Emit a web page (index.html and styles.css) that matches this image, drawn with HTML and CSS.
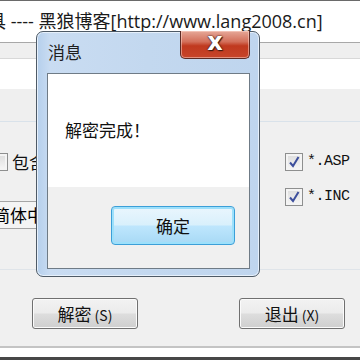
FILE: index.html
```html
<!DOCTYPE html>
<html>
<head>
<meta charset="utf-8">
<link rel="stylesheet" href="styles.css">
</head>
<body>
<div class="app">
  <div class="caption"><span class="cap-text">具 ---- 黑狼博客[http://www.lang2008.cn]</span></div>
  <div class="toolbar"></div>
  <div class="whiteband"></div>
  <div class="grayband"></div>
  <div class="main">
    <div class="col-left">
      <div class="check-row"><span class="cb"></span><span class="lbl">包含文件</span></div>
      <div class="combo">简体中文</div>
    </div>
    <div class="col-right">
      <div class="check-row"><span class="cb checked"><svg viewBox="0 0 18 18" width="18" height="18"><path d="M5 9.5 L8 13 L13.5 4" fill="none" stroke="#3d4f9c" stroke-width="2"/></svg></span><span class="mono">*.ASP</span></div>
      <div class="check-row"><span class="cb checked"><svg viewBox="0 0 18 18" width="18" height="18"><path d="M5 9.5 L8 13 L13.5 4" fill="none" stroke="#3d4f9c" stroke-width="2"/></svg></span><span class="mono">*.INC</span></div>
    </div>
  </div>
  <div class="footer">
    <button class="btn">解密<span class="acc">(S)</span></button>
    <button class="btn">退出<span class="acc">(X)</span></button>
  </div>
  <div class="bottom"></div>
</div>

<div class="dialog">
  <div class="dlg-title">消息</div>
  <div class="close"><span>x</span></div>
  <div class="client">
    <div class="msg">解密完成！</div>
    <div class="actions"><button class="ok">确定</button></div>
  </div>
</div>
</body>
</html>
```
FILE: styles.css
```css
html, body {
  margin: 0;
  padding: 0;
}
body {
  width: 360px;
  height: 360px;
  overflow: hidden;
  position: relative;
  background: #f0f0f0;
  font-family: "Noto Sans CJK SC", sans-serif;
}
.app {
  display: flex;
  flex-direction: column;
  height: 360px;
}
.caption {
  height: 41px;
  border-top: 1px solid #6a6a6a;
  background: #ffffff;
  white-space: nowrap;
  overflow: hidden;
}
.cap-text {
  display: block;
  margin-left: -12px;
  padding-top: 8px;
  font-family: "Open Sans", "Noto Sans CJK SC", sans-serif;
  font-size: 18px;
  line-height: 24px;
  color: #1a1a1a;
}
.toolbar {
  height: 15px;
  border-top: 1px solid #a8a8a8;
  border-bottom: 1px solid #d8d8d8;
  background: #efefef;
}
.whiteband {
  height: 30px;
  background: #ffffff;
}
.grayband {
  height: 32px;
  background: #efefef;
  border-bottom: 1px solid #d9e2ea;
}
.main {
  height: 147px;
  display: flex;
  justify-content: space-between;
  padding-top: 30px;
  box-sizing: border-box;
}
.col-left {
  display: flex;
  flex-direction: column;
  gap: 30px;
  margin-left: -10px;
}
.col-right {
  display: flex;
  flex-direction: column;
  gap: 16px;
  width: 75px;
}
.check-row {
  display: flex;
  align-items: center;
  height: 19px;
  gap: 4px;
}
.cb {
  width: 16px;
  height: 16px;
  border: 1px solid #8e8f8f;
  background: linear-gradient(#dcdcdc, #f7f7f7);
  box-shadow: inset 0 0 0 2px #f4f4f4;
  position: relative;
  flex: none;
}
.cb svg {
  position: absolute;
  left: -1px;
  top: -1px;
}
.lbl {
  font-size: 17px;
  color: #111;
  line-height: 19px;
}
.mono {
  font-family: "Liberation Mono", monospace;
  font-size: 15px;
  color: #111;
  letter-spacing: -0.5px;
}
.combo {
  width: 46px;
  height: 26px;
  border: 1px solid #a5a5a5;
  background: #f4f4f4;
  font-size: 17px;
  line-height: 26px;
  white-space: nowrap;
  overflow: hidden;
  padding-left: 2px;
  box-sizing: content-box;
}
.footer {
  height: 77px;
  border-top: 1px solid #dfe4e9;
  display: flex;
  justify-content: space-between;
  padding: 28px 15px 0 32px;
  box-sizing: border-box;
}
.btn {
  width: 106px;
  height: 31px;
  border: 1px solid #707070;
  border-radius: 3px;
  background: linear-gradient(#f2f2f2 0%, #ebebeb 48%, #dddddd 52%, #cfcfcf 100%);
  box-shadow: inset 0 0 0 1px #fbfbfb;
  font-family: "Noto Sans CJK SC", sans-serif;
  font-size: 17px;
  color: #111;
  padding: 0;
  line-height: 29px;
}
.acc {
  font-size: 14px;
  margin-left: 3px;
}
.bottom {
  flex: 1;
  border-top: 2px solid #c4c4c4;
  border-bottom: 3px solid #474747;
  background: #ffffff;
  box-sizing: border-box;
  margin-top: auto;
}

/* dialog */
.dialog {
  position: absolute;
  left: 36px;
  top: 31px;
  width: 224px;
  height: 246px;
  box-sizing: border-box;
  border: 1px solid #4e5a66;
  border-radius: 7px;
  background: linear-gradient(90deg, #b5cfec 0%, #c9dcf2 6%, #c3d8ef 50%, #bfd5ee 100%);
  padding: 41px 9px 9px 10px;
  box-shadow: inset 0 0 0 1px #e6f0fb;
}
.dlg-title {
  position: absolute;
  left: 11px;
  top: 9px;
  font-size: 17px;
  line-height: 22px;
  color: #1e1e1e;
}
.close {
  position: absolute;
  right: 9px;
  top: -1px;
  width: 68px;
  height: 27px;
  border: 1px solid #5c2b25;
  border-top: none;
  border-radius: 0 0 5px 5px;
  background: linear-gradient(#e6a898 0%, #d36f5a 40%, #c0391f 55%, #c7452a 100%);
  box-shadow: inset 0 0 0 1px rgba(255,220,210,0.5);
  display: flex;
  justify-content: center;
  align-items: center;
}
.close span {
  font-family: "DejaVu Sans", sans-serif;
  font-weight: bold;
  font-size: 24px;
  line-height: 24px;
  color: #ffffff;
  margin-top: -5px;
  text-shadow: 0 0 1px #3a1a12, 0 0 2px #3a1a12, 1px 1px 1px #3a1a12;
}
.client {
  height: 194px;
  border: 1px solid #6f7b86;
  background: #f0f0f0;
  display: flex;
  flex-direction: column;
}
.msg {
  height: 113px;
  background: #ffffff;
  font-size: 17px;
  line-height: 18px;
  padding: 47px 0 0 17px;
  box-sizing: border-box;
  color: #111;
}
.actions {
  display: flex;
  justify-content: flex-end;
  padding: 19px 14px 0 0;
}
.ok {
  width: 124px;
  height: 39px;
  border: 1px solid #3c9fd8;
  border-radius: 4px;
  background: linear-gradient(#eaf6fd 0%, #d9f0fc 48%, #bee6fd 52%, #a7d9f5 100%);
  box-shadow: inset 0 0 0 2px #9de0fb;
  font-family: "Noto Sans CJK SC", sans-serif;
  font-size: 17px;
  color: #111;
  padding: 0;
}
```
